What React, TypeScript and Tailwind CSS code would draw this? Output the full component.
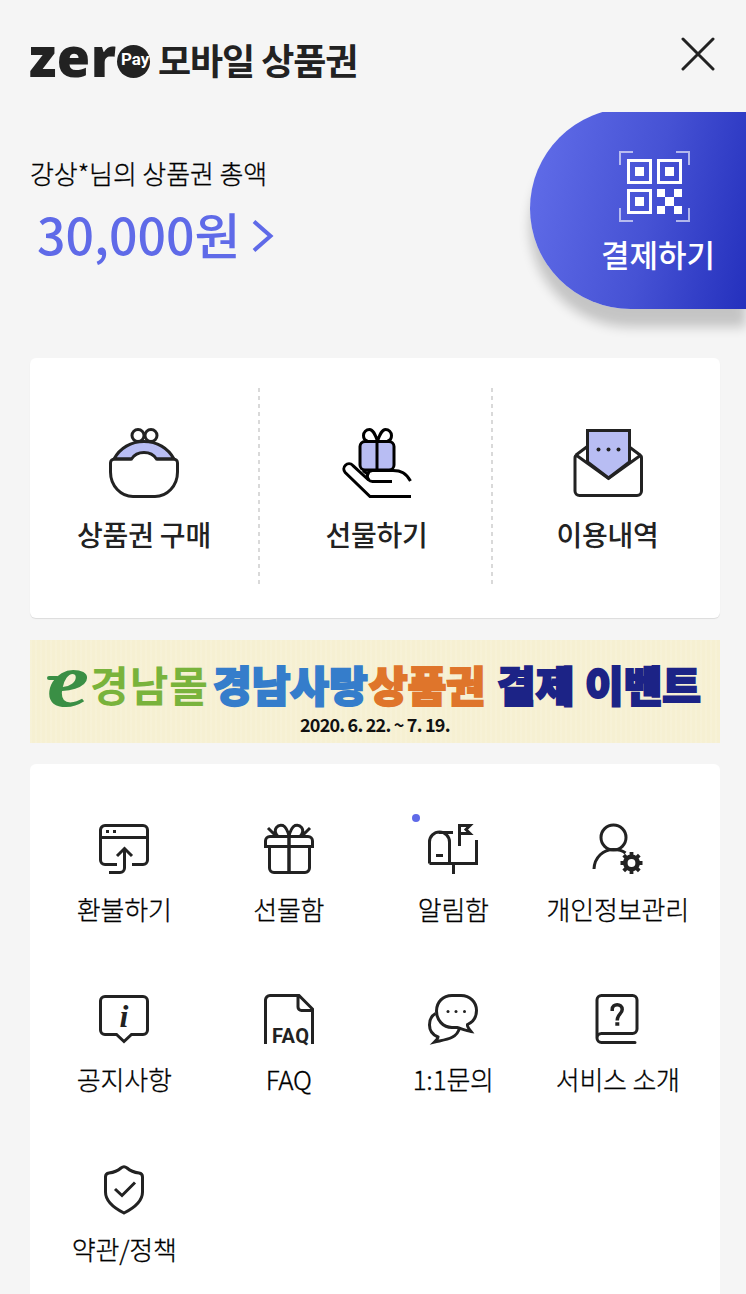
import type { ReactNode } from "react";

const INK = "#222222";
const LILAC = "#b8bdf3";

interface IconProps {
  size: number;
  children: ReactNode;
  width?: number;
}

function Icon({ size, children, width = 3 }: IconProps) {
  return (
    <svg
      width={size}
      height={size}
      viewBox={`0 0 ${size} ${size}`}
      fill="none"
      stroke={INK}
      strokeWidth={width}
      className="block shrink-0 overflow-visible"
    >
      {children}
    </svg>
  );
}

function PurseIcon() {
  return (
    <Icon size={70}>
      <circle cx="29" cy="7.5" r="6" />
      <circle cx="42" cy="7.5" r="6" />
      <path d="M5 31C11 20 22 13.500 35 13.500S59 20 65 31H47.500C45 27 40.500 24.500 35 24.500S25 27 22.500 31Z" fill={LILAC} />
      <path d="M22.500 31H5.500a4 4 0 0 0-4 4v9C1.500 58 12 68.500 24 68.500H46C58 68.500 68.500 58 68.500 44V35a4 4 0 0 0-4-4H47.500" />
    </Icon>
  );
}

function HandGiftIcon() {
  return (
    <svg width="70" height="70" viewBox="0 0 70 70" fill="none" stroke="#000" strokeWidth="3" className="block shrink-0">
      <path d="M35.500 13C33 6 31 1.500 27.500 1.500a6 6 0 0 0-6 6c0 2.500 1.500 5 4 5.500M35.500 13C38 6 40 1.500 43.500 1.500a6 6 0 0 1 6 6c0 2.500-1.500 5-4 5.500" />
      <rect x="18" y="13.500" width="34" height="28.500" rx="5" fill={LILAC} />
      <path d="M35 13.500V42" />
      <path d="M69 68.500H28L3.200 44.500a5.200 5.200 0 0 1 7.500-7.200L26 51.500c1.500 1.400 2.500 2 4.500 2H50" />
      <path d="M27 52C24 49 25 42.500 30.500 42.500H51C59 42.500 64 45 68.500 53" />
      <path d="M21 42.500L27 47" />
    </svg>
  );
}

function LetterIcon() {
  return (
    <Icon size={70}>
      <path d="M15 18L3 27M55 18L67 27" />
      <path d="M14.500 34V2.500H56.500V34L35.500 50Z" fill={LILAC} />
      <path d="M3 27L35.500 50.500L68 27M4 27a3 3 0 0 0-2 3V63a4.500 4.500 0 0 0 4.500 4.500H64A4.500 4.500 0 0 0 68.500 63V30A3 3 0 0 0 66.500 27" />
      <g fill={INK} stroke="none">
        <circle cx="25.500" cy="21.500" r="2" />
        <circle cx="35.500" cy="21.500" r="2" />
        <circle cx="45.500" cy="21.500" r="2" />
      </g>
    </Icon>
  );
}

function RefundIcon() {
  return (
    <Icon size={50}>
      <path d="M18 40.500H6A4.500 4.500 0 0 1 1.500 36V6A4.500 4.500 0 0 1 6 1.500H44A4.500 4.500 0 0 1 48.500 6V36A4.500 4.500 0 0 1 44 40.500H33M1.500 13.500H48.500" />
      <path d="M10 48.500H21a4.500 4.500 0 0 0 4.500-4.500V25M18 32L25.500 24.500L33 32" />
      <path d="M7 7.500h3M14 7.500h3" />
    </Icon>
  );
}

function GiftIcon() {
  return (
    <Icon size={50}>
      <path d="M1.500 22.500V17A4.500 4.500 0 0 1 6 12.500H44A4.500 4.500 0 0 1 48.500 17V22.500Z" />
      <path d="M5.500 23.500V44A4.500 4.500 0 0 0 10 48.500H41A4.500 4.500 0 0 0 45.500 44V23.500" />
      <path d="M25 12V50" strokeWidth="3.500" />
      <path d="M13.500 12C8 5 14 0 19 1.500C22 3 24 8 25 12C26 8 28 3 31 1.500C36 0 42 5 36.500 12M4 4L12 12M46 4L38 12" />
    </Icon>
  );
}

function MailboxIcon() {
  return (
    <Icon size={50}>
      <path d="M1.500 39.500V18a10 10 0 0 1 20 0V39.500M1.500 39.500H48.500V16M11 8.500H25M8 31.500H15M25.500 40V50" />
      <path d="M31.500 22V1.500H42L38 5.500L42 9.500H32" />
    </Icon>
  );
}

function ProfileIcon() {
  return (
    <Icon size={50}>
      <circle cx="20.500" cy="13.500" r="12.500" />
      <path d="M1 45C1.500 33 10.500 25.500 20.500 25.500C25.500 25.500 29.500 26.500 32.500 29" />
      <circle cx="38.500" cy="39" r="6.200" strokeWidth="4.600" />
      <path
        d="M38.500 28v5M38.500 45v5M27.500 39h5M44.500 39h5M30.700 31.200l3.500 3.500M42.800 43.300l3.500 3.500M46.300 31.200l-3.500 3.500M34.200 43.300l-3.500 3.500"
        strokeWidth="3.800"
      />
    </Icon>
  );
}

function NoticeIcon() {
  return (
    <Icon size={50}>
      <path d="M6 2.500H44A4.500 4.500 0 0 1 48.500 7V36A4.500 4.500 0 0 1 44 40.500H32.500L25 47.500L17.500 40.500H6A4.500 4.500 0 0 1 1.500 36V7A4.500 4.500 0 0 1 6 2.500Z" />
      <text
        x="20.500"
        y="32.500"
        fontSize="32"
        fontWeight="700"
        fontStyle="italic"
        fill={INK}
        stroke="none"
        fontFamily="Liberation Serif, serif"
      >
        i
      </text>
    </Icon>
  );
}

function FaqIcon() {
  return (
    <Icon size={50}>
      <path d="M1.500 50V6A4.500 4.500 0 0 1 6 1.500H35L48.500 15V50M34 1.500V13a3.500 3.500 0 0 0 3.500 3.500H48" />
      <text
        x="8"
        y="49"
        fontSize="20"
        fontWeight="700"
        textLength="37"
        lengthAdjust="spacing"
        fill={INK}
        stroke="none"
        fontFamily="Roboto, sans-serif"
      >
        FAQ
      </text>
    </Icon>
  );
}

function ChatIcon() {
  return (
    <Icon size={50}>
      <path d="M24 1.500H33C42 1.500 48.500 8 48.500 16.500C48.500 23 45 28 39.500 30.500C39 32 41 35 43 37.500C39 37 34 35 29 33.500H24C15 33.500 8.500 26 8.500 17S15 1.500 24 1.500Z" />
      <path d="M7.500 19.500C3 22 1.500 27 1.500 31C1.500 37 5 41 10 43C10 44.500 8.500 46 6.500 48C17 45.500 29 45 31.500 34" />
      <g fill={INK} stroke="none">
        <circle cx="20" cy="17.500" r="1.500" />
        <circle cx="28" cy="17.500" r="1.500" />
        <circle cx="36.500" cy="17.500" r="1.500" />
      </g>
    </Icon>
  );
}

function BookIcon() {
  return (
    <Icon size={50}>
      <path d="M4 44V6A4.500 4.500 0 0 1 8.500 1.500H39.500A4.500 4.500 0 0 1 44 6V35A4.500 4.500 0 0 1 39.500 39.500H8.500a4.500 4.500 0 0 0 0 9H42" strokeLinecap="round" />
      <path d="M19.200 17V15.500C19.200 9 29.200 9 29.200 15.500C29.200 20 24.200 20 24.200 26.500" strokeWidth="3.500" />
      <path d="M22.300 30h4" strokeWidth="3.500" />
    </Icon>
  );
}

function ShieldIcon() {
  return (
    <Icon size={50}>
      <path d="M22 4Q25 1.500 28 4C32 7.500 36 8.500 40 9Q43.500 9.500 43.500 13V28C43.500 38 35 44 25 49C15 44 6.500 38 6.500 28V13Q6.500 9.500 10 9C14 8.500 18 7.500 22 4Z" />
      <path d="M16 25L23 31.500L36 18.500" />
    </Icon>
  );
}

function QrIcon() {
  return (
    <svg width="71" height="71" viewBox="0 0 71 71" fill="none" stroke="#fff" strokeWidth="3" className="-ml-2 block">
      <path d="M14 1H1V14M57 1H70V14M1 57V70H14M57 70H70V57" strokeWidth="2" opacity="0.600" />
      <path d="M9.500 9.500h22v22h-22zM39.500 9.500h22v22h-22zM9.500 39.500h22v22h-22z" />
      <path
        d="M16 16h9v9h-9zM46 16h9v9h-9zM16 46h9v9h-9zM38 38h8v8h-8zM55 38h8v8h-8zM46 46h9v9h-9zM38 55h8v8h-8zM55 55h8v8h-8z"
        fill="#fff"
        stroke="none"
      />
    </svg>
  );
}

interface MenuItem {
  label: string;
  icon: ReactNode;
  isNew?: boolean;
}

const mainMenu: MenuItem[] = [
  { label: "상품권 구매", icon: <PurseIcon /> },
  { label: "선물하기", icon: <HandGiftIcon /> },
  { label: "이용내역", icon: <LetterIcon /> },
];

const subMenu: MenuItem[] = [
  { label: "환불하기", icon: <RefundIcon /> },
  { label: "선물함", icon: <GiftIcon /> },
  { label: "알림함", icon: <MailboxIcon />, isNew: true },
  { label: "개인정보관리", icon: <ProfileIcon /> },
  { label: "공지사항", icon: <NoticeIcon /> },
  { label: "FAQ", icon: <FaqIcon /> },
  { label: "1:1문의", icon: <ChatIcon /> },
  { label: "서비스 소개", icon: <BookIcon /> },
  { label: "약관/정책", icon: <ShieldIcon /> },
];

function Header() {
  return (
    <header className="flex h-28 shrink-0 items-start justify-between pl-[29px] pr-[31px] pt-[37px] text-[#222222]">
      <h1 className="flex h-12 items-center whitespace-nowrap">
        <span className="-mt-[11px] w-[88px] font-['Open_Sans',sans-serif] text-[54px] font-extrabold leading-[48px] tracking-[0.500px]">
          zer
        </span>
        <span className="flex h-[33px] w-[33px] items-start rounded-full bg-[#222222] pl-1 pt-1 font-['Roboto',sans-serif] text-[17px] font-bold leading-5 text-white">
          Pay
        </span>
        <span className="-mt-1 ml-2 text-[36px] font-bold leading-[48px] tracking-[-1.100px]">
          모바일 상품권
        </span>
      </h1>
      <button title="닫기">
        <svg width="34" height="34" viewBox="0 0 34 34" stroke={INK} strokeWidth="3" strokeLinecap="round">
          <path d="M2 2L32 32M32 2L2 32" />
        </svg>
      </button>
    </header>
  );
}

function Balance() {
  return (
    <section className="flex h-[246px] shrink-0 justify-between overflow-hidden pl-[30px]">
      <div className="pt-[42px]">
        <p className="text-[26px] font-light leading-[38px] tracking-[-0.100px] text-black [-webkit-text-stroke:0.300px]">
          강상*님의 상품권 총액
        </p>
        <p className="flex items-center pl-[7px] text-[50px] font-medium leading-[82px] text-[#5f6ae8]">
          <span>30,000원</span>
          <svg width="22" height="32" viewBox="0 0 22 32" fill="none" stroke="currentColor" strokeWidth="4" className="ml-3 mt-1.5">
            <path d="M2 1.500L18.500 16L2 30.500" />
          </svg>
        </p>
      </div>
      <button className="-mt-1 flex h-[201px] w-[216px] flex-col items-center rounded-l-full bg-[linear-gradient(102deg,#606ce8_4%,#4652d4_55%,#2430bd_100%)] pl-10 pt-[43px] text-white shadow-[0_18px_12px_rgba(0,0,0,0.200)]">
        <QrIcon />
        <span className="mt-2 text-[31px] font-medium leading-[48px]">결제하기</span>
      </button>
    </section>
  );
}

function MainMenu() {
  return (
    <section className="grid h-[260px] shrink-0 grid-cols-[228px_233px_229px] rounded-md bg-white pt-[30px] shadow-[0_1px_1px_rgba(0,0,0,0.100)]">
      {mainMenu.map((item, index) => (
        <div key={item.label} className="flex h-[196px]">
          {index > 0 && (
            <div className="mr-0.5 w-0.5 bg-[repeating-linear-gradient(to_bottom,#d9d9d9_0,#d9d9d9_4px,transparent_4px,transparent_8px)]" />
          )}
          <button className="flex flex-1 flex-col items-center pt-10 text-[#222222]">
            {item.icon}
            <span className="mt-4 whitespace-nowrap text-[28px] font-medium leading-10 tracking-[-0.200px]">
              {item.label}
            </span>
          </button>
        </div>
      ))}
    </section>
  );
}

function EventBanner() {
  return (
    <section className="flex h-[103px] shrink-0 flex-col bg-[#f6f0d2] bg-[repeating-linear-gradient(90deg,rgba(255,255,255,0.100)_0,rgba(255,255,255,0.100)_2px,transparent_2px,transparent_5px)] pl-[17px]">
      <div className="flex h-[67px] items-end whitespace-nowrap text-[42px] font-black leading-[46px]">
        <span className="relative w-[43px] text-[#3a8f45]">
          <span className="block origin-left scale-x-[1.250] font-['Liberation_Serif',serif] text-[76px] font-bold italic leading-[54px]">
            e
          </span>
          <i className="absolute left-0 top-[23px] h-1 w-3 rounded-full bg-[#3a8f45]" />
        </span>
        <span className="w-[123px] font-bold tracking-[1px] text-[#79b33c]">경남몰</span>
        <span className="w-[156px] text-[#357dcb] [-webkit-text-stroke:2px]">경남사랑</span>
        <span className="w-[128px] text-[#df752b] [-webkit-text-stroke:2px]">상품권</span>
        <span className="w-[88px] text-[#1c2386] [-webkit-text-stroke:2px]">결제</span>
        <span className="text-[#1c2386] [-webkit-text-stroke:2px]">이벤트</span>
      </div>
      <p className="pl-[253px] text-[18px] font-bold leading-[34px] tracking-[-0.800px] text-[#111111]">
        2020. 6. 22. ~ 7. 19.
      </p>
    </section>
  );
}

function SubMenu() {
  return (
    <section className="grid flex-1 auto-rows-[170px] grid-cols-4 rounded-t-md bg-white pl-3 pr-5 pt-[60px]">
      {subMenu.map((item) => (
        <button key={item.label} className="flex flex-col items-center text-black">
          <span className="relative">
            {item.icon}
            {item.isNew && <i className="absolute -left-4 -top-2.5 h-2 w-2 rounded-full bg-[#5f6ae8]" />}
          </span>
          <span className="mt-4 whitespace-nowrap text-[26px] font-light leading-[38px] tracking-[-0.200px] [-webkit-text-stroke:0.300px]">
            {item.label}
          </span>
        </button>
      ))}
    </section>
  );
}

export default function App() {
  return (
    <main className="flex h-[1294px] w-[746px] flex-col overflow-hidden bg-[#f5f5f5] font-['Noto_Sans_CJK_KR',sans-serif]">
      <Header />
      <Balance />
      <div className="flex min-h-0 flex-1 flex-col pl-[30px] pr-[26px]">
        <MainMenu />
        <div className="h-[22px] shrink-0" />
        <EventBanner />
        <div className="h-[21px] shrink-0" />
        <SubMenu />
      </div>
    </main>
  );
}
